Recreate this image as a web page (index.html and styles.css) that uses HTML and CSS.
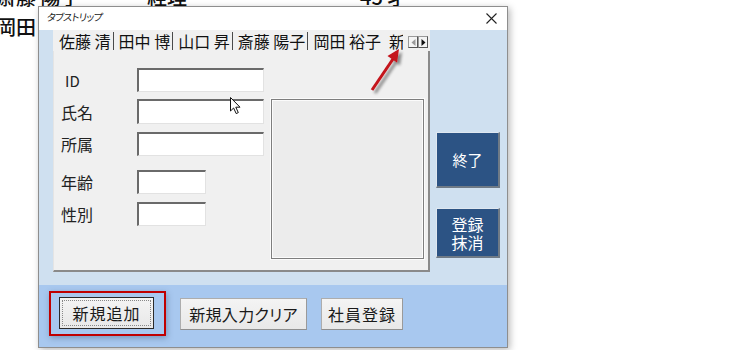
FILE: index.html
```html
<!DOCTYPE html>
<html lang="ja">
<head>
<meta charset="utf-8">
<title>タブストリップ</title>
<link rel="stylesheet" href="styles.css">
</head>
<body>
<div class="sheet">
  <div class="row"><span class="c1">斎藤 陽子</span><span class="c2">経理</span><span class="c3">45 才</span></div>
  <div class="row"><span class="c1">岡田</span></div>
</div>

<div class="window">
  <div class="titlebar">
    <span class="title">タブストリップ</span>
    <svg class="close" width="11" height="11" viewBox="0 0 11 11"><path d="M0.5 0.5 L10.5 10.5 M10.5 0.5 L0.5 10.5" stroke="#222" stroke-width="1.1" fill="none"/></svg>
  </div>
  <div class="client">
    <div class="upper">
      <div class="tabstrip">
        <div class="tabs">
          <div class="tab">佐藤 清</div>
          <div class="tab">田中 博</div>
          <div class="tab">山口 昇</div>
          <div class="tab">斎藤 陽子</div>
          <div class="tab last">岡田 裕子</div>
          <div class="tab cur">新規</div>
          <div class="scroller">
            <span class="sbox"><svg width="5" height="7" viewBox="0 0 5 7"><path d="M4.5 0 L0.5 3.5 L4.5 7 Z" fill="#9a9a9a"/></svg></span>
            <span class="sbox"><svg width="5" height="7" viewBox="0 0 5 7"><path d="M0.5 0 L4.5 3.5 L0.5 7 Z" fill="#111"/></svg></span>
          </div>
        </div>
        <div class="page">
          <div class="form">
            <div class="field f1"><span class="lbl id">ID</span><span class="tb"></span></div>
            <div class="field f2"><span class="lbl">氏名</span><span class="tb"></span></div>
            <div class="field f3"><span class="lbl">所属</span><span class="tb"></span></div>
            <div class="field f4"><span class="lbl">年齢</span><span class="tb short"></span></div>
            <div class="field f5"><span class="lbl">性別</span><span class="tb short"></span></div>
          </div>
          <div class="photo"></div>
        </div>
      </div>
      <div class="side">
        <button class="sbtn end">終了</button>
        <button class="sbtn del">登録<br>抹消</button>
      </div>
    </div>
    <div class="bottom">
      <div class="mark"><button class="btn focus">新規追加</button></div>
      <button class="btn clear">新規入力クリア</button>
      <button class="btn reg">社員登録</button>
    </div>
  </div>

  <svg class="overlay" width="470" height="342" viewBox="0 0 470 342">
    <defs>
      <filter id="sh" x="-50%" y="-50%" width="200%" height="200%">
        <feGaussianBlur in="SourceAlpha" stdDeviation="1.6"/>
        <feOffset dx="3" dy="3" result="b"/>
        <feComponentTransfer><feFuncA type="linear" slope="0.45"/></feComponentTransfer>
        <feMerge><feMergeNode/><feMergeNode in="SourceGraphic"/></feMerge>
      </filter>
    </defs>
    <g filter="url(#sh)">
      <line x1="334" y1="84" x2="355" y2="53" stroke="#c4121a" stroke-width="3"/>
      <polygon points="361,43 359,56.5 349.5,50" fill="#c4121a"/>
    </g>
    <path d="M192.5 91.5 L192.5 105 L195.6 102 L198.2 107.6 L200.3 106.6 L197.8 101.2 L202 101.2 Z" fill="#fff" stroke="#111" stroke-width="1"/>
  </svg>
</div>
</body>
</html>
```

FILE: styles.css
```css
html, body {
  margin: 0;
  padding: 0;
  background: #ffffff;
  width: 750px;
  height: 350px;
  overflow: hidden;
  font-family: "Noto Sans CJK JP", "Noto Sans", sans-serif;
}

.sheet {
  margin-top: -18px;
  margin-left: -4px;
  font-size: 20px;
  font-weight: 500;
  color: #111;
}

.sheet .row {
  display: grid;
  grid-template-columns: 151px 213px auto;
  height: 30px;
  line-height: 30px;
  white-space: nowrap;
}

.window {
  position: absolute;
  left: 38px;
  top: 6px;
  width: 470px;
  height: 342px;
  box-sizing: border-box;
  border: 1px solid #8e8e8e;
  background: #cfe0f0;
  box-shadow: 2px 2px 7px rgba(0, 0, 0, 0.28);
  display: flex;
  flex-direction: column;
}

.titlebar {
  height: 23px;
  background: #ffffff;
  display: flex;
  justify-content: space-between;
  align-items: flex-start;
  padding: 3px 10px 0 8px;
  box-sizing: border-box;
}

.title {
  font-size: 10px;
  line-height: 14px;
  letter-spacing: -0.6px;
  font-feature-settings: "palt";
  color: #222;
  transform: skewX(-8deg);
}

.close {
  margin-top: 3px;
}

.client {
  flex: 1;
  display: flex;
  flex-direction: column;
}

.upper {
  height: 255px;
  display: flex;
  padding-left: 14px;
  background: #cfe0f0;
}

.tabstrip {
  width: 377px;
  height: 242px;
  display: flex;
  flex-direction: column;
  background: #f0f0f0;
}

.tabs {
  position: relative;
  height: 21px;
  display: flex;
  align-items: flex-end;
  padding-left: 6px;
  overflow: hidden;
  white-space: nowrap;
  font-size: 16px;
  color: #111;
}

.tab {
  height: 18px;
  line-height: 18px;
  padding-right: 2px;
  margin-right: 5px;
  border-right: 1.5px solid #4a4a4a;
  margin-bottom: 1px;
}

.tab.last {
  border-right: none;
  margin-right: 6px;
}

.tab.cur {
  border-right: none;
  width: 14px;
  overflow: hidden;
  padding-right: 0;
  margin-right: 0;
}

.scroller {
  position: absolute;
  right: 2px;
  top: 6px;
  display: flex;
  background: #f0f0f0;
}

.sbox {
  width: 10px;
  height: 12px;
  box-sizing: border-box;
  border: 1px solid #9a9a9a;
  border-right-color: #555;
  border-bottom-color: #555;
  background: #f4f4f4;
  display: flex;
  align-items: center;
  justify-content: center;
}

.page {
  flex: 1;
  display: flex;
  padding: 17px 0 0 7px;
  border-right: 2px solid #8a8a8a;
  border-bottom: 2px solid #8a8a8a;
  border-left: 1px solid #e4e4e4;
  gap: 7px;
}

.form {
  display: flex;
  flex-direction: column;
}

.field {
  display: flex;
  align-items: center;
  height: 24px;
}

.f2 { margin-top: 7px; height: 25px; }
.f3 { margin-top: 8px; }
.f4 { margin-top: 14px; }
.f5 { margin-top: 8px; }

.lbl {
  width: 76px;
  font-size: 16px;
  color: #222;
}

.lbl.id {
  padding-left: 4px;
  box-sizing: border-box;
  font-size: 15px;
}

.tb {
  width: 127px;
  height: 100%;
  box-sizing: border-box;
  background: #ffffff;
  border-top: 2px solid #6a6a6a;
  border-left: 2px solid #6a6a6a;
  border-right: 1px solid #e2e2e2;
  border-bottom: 1px solid #e2e2e2;
}

.tb.short {
  width: 69px;
}

.photo {
  margin-top: 31px;
  width: 153px;
  height: 160px;
  box-sizing: border-box;
  border: 1px solid #7e7e7e;
  box-shadow: inset 0 0 0 1px #fbfbfb, 0 0 0 1px #fbfbfb;
  background: #ececec;
}

.side {
  flex: 1;
  display: flex;
  flex-direction: column;
  align-items: flex-start;
  padding: 102px 0 0 6px;
  gap: 20px;
}

.sbtn {
  width: 64px;
  padding: 0;
  box-sizing: border-box;
  background: #2c5384;
  color: #ffffff;
  font-family: "Noto Sans CJK JP", sans-serif;
  font-size: 16px;
  line-height: 18px;
  border-style: solid;
  border-width: 1px 2px 2px 1px;
  border-color: #dfe7f0 #6f7a86 #6f7a86 #dfe7f0;
}

.sbtn.end {
  height: 56px;
  font-size: 15px;
}

.sbtn.del {
  height: 50px;
}

.bottom {
  flex: 1;
  display: flex;
  align-items: center;
  padding: 0 0 5px 10px;
  background: #a8c8ef;
}

.mark {
  border: 2px solid #c00000;
  padding: 4px 10px 5px 8px;
  box-shadow: 1px 2px 6px rgba(40, 60, 90, 0.35);
  margin-right: 14px;
  display: flex;
}

.btn {
  height: 32px;
  padding: 0;
  box-sizing: border-box;
  background: linear-gradient(#f4f4f4, #e8e8e8);
  border: 1px solid #adadad;
  border-right-color: #9a9a9a;
  border-bottom-color: #8f8f8f;
  font-family: "Noto Sans CJK JP", sans-serif;
  font-size: 16px;
  color: #1a1a1a;
  font-feature-settings: "palt";
}

.btn.focus {
  width: 95px;
  border: 1px solid #2a2a2a;
  outline: 1px dotted #888;
  outline-offset: -4px;
  letter-spacing: 1px;
}

.btn.clear {
  width: 127px;
  margin-right: 14px;
  letter-spacing: 0.3px;
}

.btn.reg {
  width: 82px;
  letter-spacing: 1px;
}

.overlay {
  position: absolute;
  left: -1px;
  top: -1px;
  pointer-events: none;
}
```
